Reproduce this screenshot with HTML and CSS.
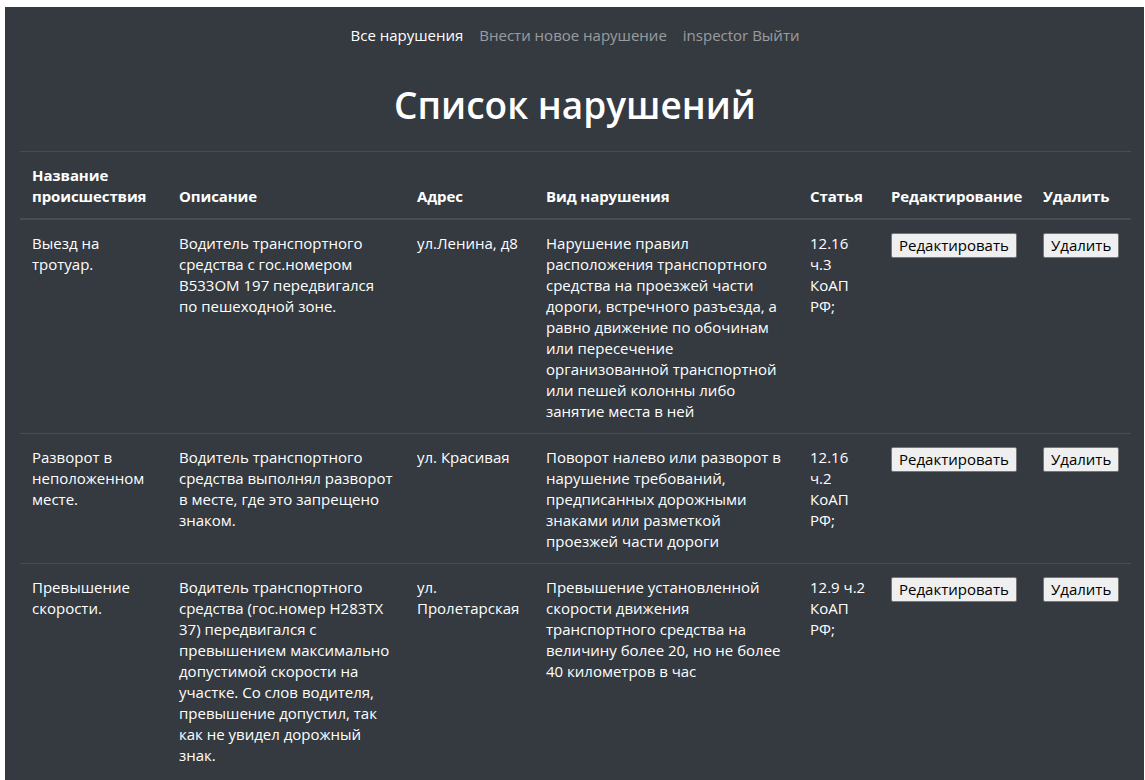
FILE: index.html
```html
<!DOCTYPE html>
<html lang="ru">
<head>
<meta charset="utf-8">
<title>Список нарушений</title>
<link rel="stylesheet" href="styles.css">
</head>
<body>
<div class="page">
  <nav class="nav">
    <a class="nav-link active" href="#">Все нарушения</a>
    <a class="nav-link" href="#">Внести новое нарушение</a>
    <a class="nav-link" href="#">inspector Выйти</a>
  </nav>
  <h1 class="title">Список нарушений</h1>
  <table class="violations">
    <colgroup>
      <col class="c-name">
      <col class="c-desc">
      <col class="c-addr">
      <col class="c-kind">
      <col class="c-art">
      <col class="c-edit">
      <col class="c-del">
    </colgroup>
    <thead>
      <tr>
        <th>Название происшествия</th>
        <th>Описание</th>
        <th>Адрес</th>
        <th>Вид нарушения</th>
        <th>Статья</th>
        <th>Редактирование</th>
        <th>Удалить</th>
      </tr>
    </thead>
    <tbody>
      <tr>
        <td>Выезд на тротуар.</td>
        <td>Водитель транспортного средства с гос.номером В533ОМ 197 передвигался по пешеходной зоне.</td>
        <td>ул.Ленина, д8</td>
        <td>Нарушение правил расположения транспортного средства на проезжей части дороги, встречного разъезда, а равно движение по обочинам или пересечение организованной транспортной или пешей колонны либо занятие места в ней</td>
        <td>12.16 ч.3 КоАП РФ;</td>
        <td><button class="btn" type="button">Редактировать</button></td>
        <td><button class="btn" type="button">Удалить</button></td>
      </tr>
      <tr>
        <td>Разворот в неположенном месте.</td>
        <td>Водитель транспортного средства выполнял разворот в месте, где это запрещено знаком.</td>
        <td>ул. Красивая</td>
        <td>Поворот налево или разворот в нарушение требований, предписанных дорожными знаками или разметкой проезжей части дороги</td>
        <td>12.16 ч.2 КоАП РФ;</td>
        <td><button class="btn" type="button">Редактировать</button></td>
        <td><button class="btn" type="button">Удалить</button></td>
      </tr>
      <tr>
        <td>Превышение скорости.</td>
        <td>Водитель транспортного средства (гос.номер Н283ТХ 37) передвигался с превышением максимально допустимой скорости на участке. Со слов водителя, превышение допустил, так как не увидел дорожный знак.</td>
        <td>ул. Пролетарская</td>
        <td>Превышение установленной скорости движения транспортного средства на величину более 20, но не более 40 километров в час</td>
        <td>12.9 ч.2 КоАП РФ;</td>
        <td><button class="btn" type="button">Редактировать</button></td>
        <td><button class="btn" type="button">Удалить</button></td>
      </tr>
    </tbody>
  </table>
</div>
</body>
</html>
```
FILE: styles.css
```css
html, body {
  margin: 0;
  padding: 0;
  background: #ffffff;
}

body {
  font-family: "Open Sans", "Noto Sans", "DejaVu Sans", sans-serif;
  font-size: 15px;
  line-height: 21px;
  color: #ffffff;
}

.page {
  margin: 7px 1px 0 5px;
  background: #343a40;
  min-height: 780px;
  padding: 0 14px 0 15px;
}

.nav {
  display: flex;
  justify-content: center;
  padding-top: 18px;
}

.nav-link {
  padding: 0 8px;
  color: rgba(255, 255, 255, 0.5);
  text-decoration: none;
}

.nav-link.active {
  color: #ffffff;
}

.title {
  margin: 37px 0 25px;
  text-align: center;
  font-size: 37px;
  line-height: 43px;
  font-weight: 600;
}

.violations {
  width: 1111px;
  border-collapse: collapse;
  table-layout: fixed;
}

.c-name { width: 147px; }
.c-desc { width: 238px; }
.c-addr { width: 129px; }
.c-kind { width: 264px; }
.c-art { width: 81px; }
.c-edit { width: 152px; }
.c-del { width: 100px; }

.violations th,
.violations td {
  padding: 13px 12px 11px;
  text-align: left;
  vertical-align: top;
  border-top: 1px solid #454d55;
}

.violations th {
  vertical-align: bottom;
  font-weight: 700;
  letter-spacing: -0.1px;
  border-bottom: 2px solid #454d55;
}

.btn {
  font-family: inherit;
  font-size: 15px;
  line-height: 21px;
  padding: 1px 7px;
  color: #000000;
  background: #efefef;
  border: 1px solid #767676;
  border-radius: 2px;
}
```
